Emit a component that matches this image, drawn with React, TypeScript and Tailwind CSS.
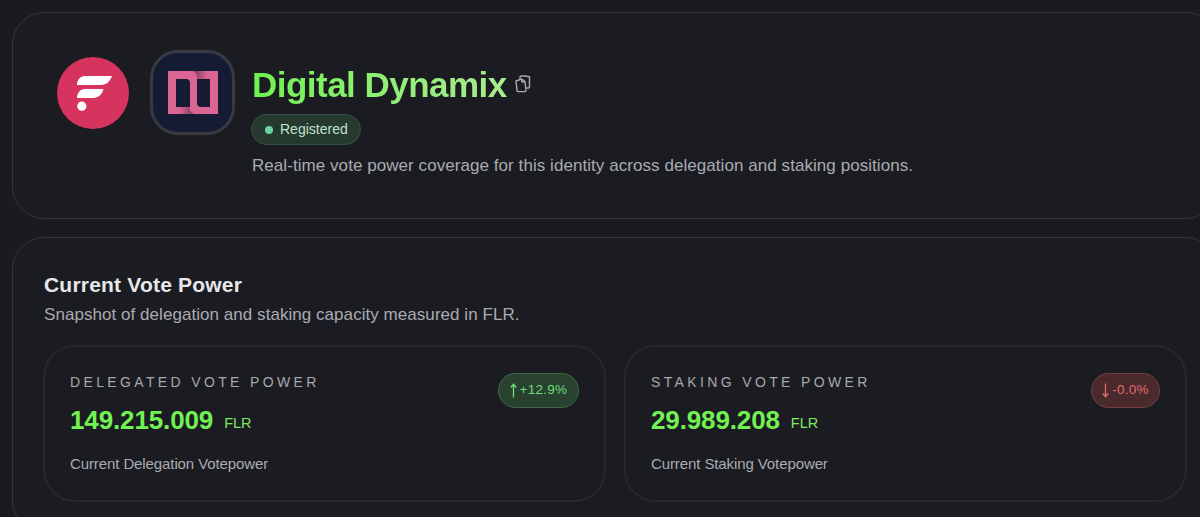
import React from "react";

function FlareLogo() {
  return (
    <svg width="72" height="72" viewBox="0 0 72 72" className="shrink-0">
      <circle cx="36" cy="36" r="36" fill="#d6335f" />
      <path d="M28 19 H55 C53 24.5 49.5 28 44 28 H20 C20 23 23 19 28 19 Z" fill="#fff" />
      <path d="M28 32 H46.5 C45 37.5 41.5 41 36 41 H20 C20 36 23 32 28 32 Z" fill="#fff" />
      <circle cx="24.8" cy="49.2" r="4.6" fill="#fff" />
    </svg>
  );
}

function DynamixLogo() {
  return (
    <div className="w-[85px] h-[85px] shrink-0 rounded-[28px] border-[3px] border-[#383a41] bg-[#141b33] flex items-center justify-center">
      <svg width="50" height="43" viewBox="0 0 50 43">
        <defs>
          <linearGradient id="foldTop" x1="0" y1="0" x2="1" y2="0">
            <stop offset="0" stopColor="#7d3a5f" />
            <stop offset="1" stopColor="#dc6693" />
          </linearGradient>
          <linearGradient id="foldBottom" x1="0" y1="0" x2="1" y2="0">
            <stop offset="0" stopColor="#dc6693" />
            <stop offset="1" stopColor="#7d3a5f" />
          </linearGradient>
        </defs>
        <path
          fillRule="evenodd"
          d="M0 0 H50 V43 H0 Z M8 8 V36 H22 V12 C22 9.5 20.5 8 18 8 Z M29 8 V32 C29 34.5 30.5 36 33 36 H42 V8 Z"
          fill="#dc6693"
        />
        <path d="M25 0 C28 1.5 29.5 4.5 29.5 8 H40 V0 Z" fill="url(#foldTop)" />
        <path d="M11 36 H21.5 C21.5 39 23 41.5 26 43 H11 Z" fill="url(#foldBottom)" />
      </svg>
    </div>
  );
}

function CopyIcon() {
  return (
    <svg width="17" height="19" viewBox="0 0 17 19" fill="none" stroke="#a9abb0" strokeWidth="1.4" strokeLinejoin="round" className="shrink-0">
      <path d="M6 3.5 V2 C6 1.4 6.4 1 7 1 H10.5 L15.5 1.8 V12 C15.5 12.6 15.1 13 14.5 13 H12.5" />
      <path d="M2 6 L7.5 4 L11 6.5 L12 15.5 C12 16.2 11.6 16.6 11 16.6 H4 C3.4 16.6 3 16.2 3 15.6 L2 6 Z" />
      <path d="M7.5 4 L8 7 L11 6.5" />
    </svg>
  );
}

function Arrow({ up }: { up: boolean }) {
  return (
    <svg width="7" height="15" viewBox="0 0 7 15" fill="none" stroke="currentColor" strokeWidth="1.3" className="shrink-0">
      {up ? <path d="M3.5 14.5 V1.5 M0.8 4.5 L3.5 1.2 L6.2 4.5" /> : <path d="M3.5 0.5 V13.5 M0.8 10.5 L3.5 13.8 L6.2 10.5" />}
    </svg>
  );
}

type StatProps = {
  label: string;
  value: string;
  caption: string;
  change: string;
  up: boolean;
};

function Stat({ label, value, caption, change, up }: StatProps) {
  return (
    <div className="flex-1 h-[157px] rounded-[32px] border-2 border-[#26282e] pl-[25px] pr-[25px] pt-[26px] flex justify-between items-start">
      <div className="flex flex-col">
        <div className="text-[14px] leading-[18px] tracking-[0.24em] text-[#a6a8ad] whitespace-nowrap">{label}</div>
        <div className="mt-[12px] flex items-baseline gap-[11px] h-[34px]">
          <span className="text-[26px] leading-[34px] font-semibold tracking-[-0.005em] text-[#72f153]">{value}</span>
          <span className="text-[14.5px] text-[#7fe862] relative -top-px">FLR</span>
        </div>
        <div className="mt-[18px] text-[15px] leading-[18px] tracking-[-0.1px] text-[#a9abb0] whitespace-nowrap">{caption}</div>
      </div>
      <div
        className={
          up
            ? "h-[35px] w-[81px] rounded-full border border-[#3f6a45] bg-[#28422f] text-[#6fdc7c] text-[13.5px] flex items-center justify-center gap-[3px]"
            : "h-[35px] w-[69px] rounded-full border border-[#744040] bg-[#4a2a2c] text-[#e56a6a] text-[13.5px] flex items-center justify-center gap-[3px]"
        }
      >
        <Arrow up={up} />
        <span className="tracking-[0.02em]">{change}</span>
      </div>
    </div>
  );
}

export default function App() {
  return (
    <div className="h-[517px] w-[1200px] overflow-hidden bg-[#1a1b20] font-['Liberation_Sans',Arial,sans-serif]">
      <div className="w-[1206px] ml-[12px] pt-[12px] flex flex-col gap-[18px]">
        <section className="h-[207px] rounded-[32px] border border-[#33353a] bg-[#1b1c21] pl-[44px] pt-[37px] flex items-start">
          <div className="mt-[7px]">
            <FlareLogo />
          </div>
          <div className="ml-[21px]">
            <DynamixLogo />
          </div>
          <div className="ml-[16px] flex flex-col">
            <div className="flex items-center gap-[7px] h-[43px] mt-[13px] ml-[1px]">
              <h1 className="text-[35px] leading-[43px] font-semibold tracking-[-0.015em] whitespace-nowrap bg-gradient-to-r from-[#6ff24f] to-[#a8ec8f] bg-clip-text text-transparent">
                Digital Dynamix
              </h1>
              <CopyIcon />
            </div>
            <div className="mt-[8px] w-[110px] h-[31px] rounded-full border border-[#34513f] bg-[#26392f] flex items-center pl-[13px] gap-[7px]">
              <span className="w-[8px] h-[8px] rounded-full bg-[#6ad3a0]" />
              <span className="text-[14px] text-[#bfe3cf]">Registered</span>
            </div>
            <p className="mt-[10px] ml-[1px] text-[17px] leading-[22px] tracking-[0.06px] text-[#a9abb0] whitespace-nowrap">
              Real-time vote power coverage for this identity across delegation and staking positions.
            </p>
          </div>
        </section>

        <section className="rounded-[32px] border border-[#33353a] bg-[#1b1c21] pl-[30px] pr-[30px] pt-[34px] pb-[30px]">
          <h2 className="ml-[1px] text-[21px] leading-[26px] font-semibold tracking-[0.2px] text-[#e6e7ea]">Current Vote Power</h2>
          <p className="ml-[1px] mt-[6px] text-[17px] leading-[22px] tracking-[0.05px] text-[#a9abb0]">
            Snapshot of delegation and staking capacity measured in FLR.
          </p>
          <div className="mt-[19px] flex gap-[18px]">
            <Stat label="DELEGATED VOTE POWER" value="149.215.009" caption="Current Delegation Votepower" change="+12.9%" up />
            <Stat label="STAKING VOTE POWER" value="29.989.208" caption="Current Staking Votepower" change="-0.0%" up={false} />
          </div>
        </section>
      </div>
    </div>
  );
}
